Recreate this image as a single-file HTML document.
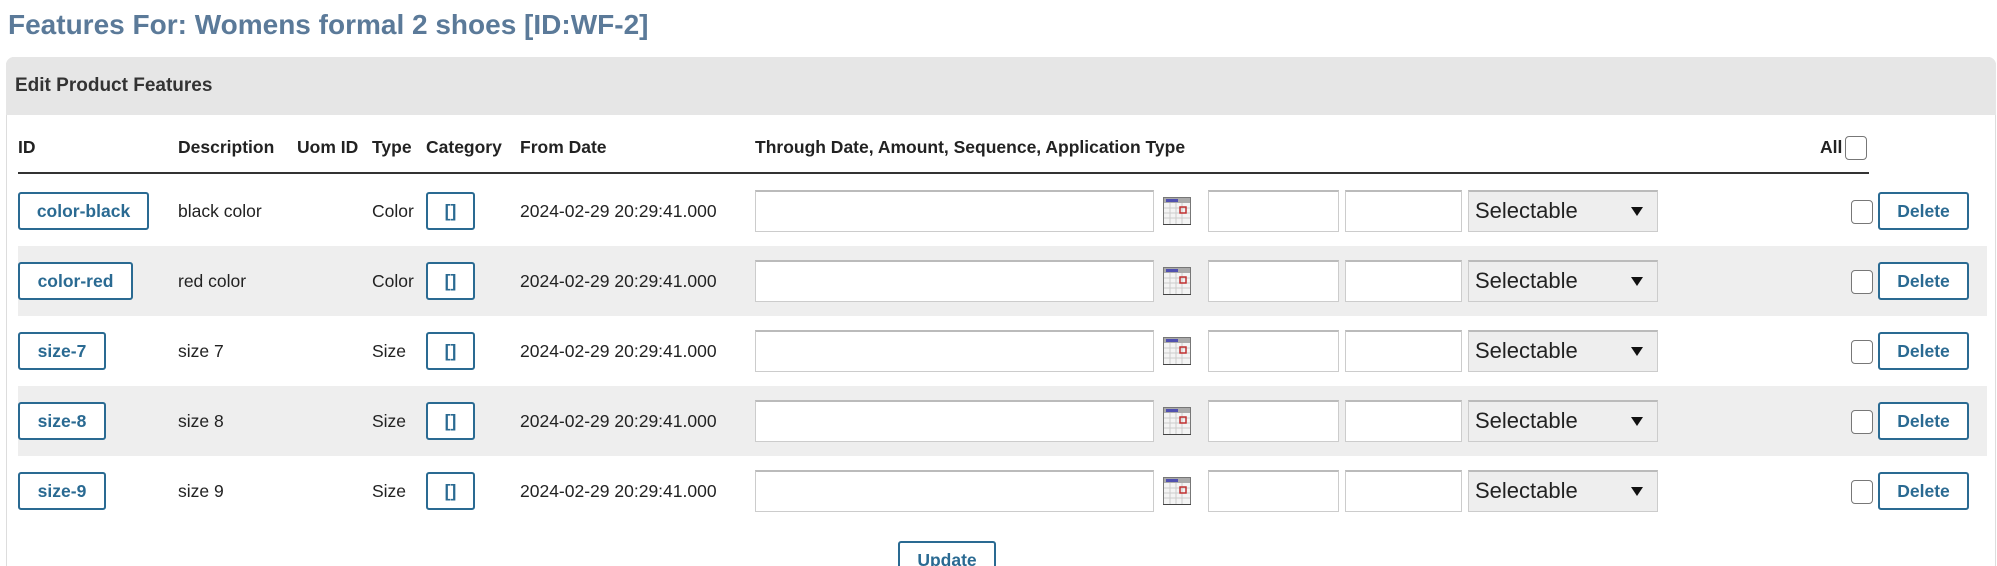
<!DOCTYPE html>
<html><head><meta charset="utf-8"><style>
*{box-sizing:border-box}
html,body{margin:0;width:1997px;height:566px;overflow:hidden}
body{background:#fff;font-family:"Liberation Sans",sans-serif;position:relative;color:#222}
.a{position:absolute}
.title{left:8px;top:9px;font-size:28px;font-weight:bold;color:#5b7a99;white-space:nowrap}
.panel{left:6px;top:57px;width:1990px;height:509px;border:1px solid #ddd;border-bottom:none;border-radius:8px 8px 0 0;background:#fff}
.ph{left:6px;top:57px;width:1990px;height:58px;background:#e6e6e6;border-radius:8px 8px 0 0}
.pht{left:15px;top:75px;font-size:19px;font-weight:bold;color:#333}
.hd{top:137px;font-size:17.5px;font-weight:bold;color:#222;white-space:nowrap}
.line{left:18px;top:172px;width:1851px;height:2px;background:#333}
.shade{left:18px;width:1969px;height:70px;background:#eeeeee}
.btn{border:2px solid #2a6a92;border-radius:3px;background:#fff;color:#2a6a92;font-weight:bold;font-size:17.5px;text-align:center;line-height:34px;height:38px;white-space:nowrap}
.t{font-size:17.5px;color:#222;white-space:nowrap}
.in{border:1px solid #ccc;border-top:2px solid #bbb;background:#fff;height:42px}
.sel{border:1px solid #ccc;border-top:2px solid #bbb;background:#eee;height:42px;font-size:22px;line-height:38px;padding-left:6px;color:#222}
.sel:after{content:"";position:absolute;right:14px;top:15px;border-left:6px solid transparent;border-right:6px solid transparent;border-top:9px solid #111}
.cb{width:22px;height:24px;border:1.5px solid #777;border-radius:4px;background:#fff}
</style></head><body>
<div class="a title">Features For: Womens formal 2 shoes [ID:WF-2]</div>
<div class="a panel"></div>
<div class="a ph"></div>
<div class="a pht">Edit Product Features</div>
<div class="a hd" style="left:18px">ID</div>
<div class="a hd" style="left:178px">Description</div>
<div class="a hd" style="left:297px">Uom ID</div>
<div class="a hd" style="left:372px">Type</div>
<div class="a hd" style="left:426px">Category</div>
<div class="a hd" style="left:520px">From Date</div>
<div class="a hd" style="left:755px">Through Date, Amount, Sequence, Application Type</div>
<div class="a hd" style="left:1820px">All</div>
<div class="a cb" style="left:1845px;top:136px"></div>
<div class="a line"></div>
<div class="a shade" style="top:246px"></div>
<div class="a shade" style="top:386px"></div>

<div id="rows"></div>
<div class="a btn" style="left:898px;top:541px;width:98px;height:40px">Update</div>
<script>
var rows=[["color-black","black color","Color",131],["color-red","red color","Color",115],["size-7","size 7","Size",88],["size-8","size 8","Size",88],["size-9","size 9","Size",88]];
var h="";
rows.forEach(function(r,i){
var c=211+i*70;
h+='<div class="a btn" style="left:18px;top:'+(c-19)+'px;width:'+r[3]+'px">'+r[0]+'</div>';
h+='<div class="a t" style="left:178px;top:'+(c-10)+'px">'+r[1]+'</div>';
h+='<div class="a t" style="left:372px;top:'+(c-10)+'px">'+r[2]+'</div>';
h+='<div class="a btn" style="left:426px;top:'+(c-19)+'px;width:49px">[]</div>';
h+='<div class="a t" style="left:520px;top:'+(c-10)+'px">2024-02-29 20:29:41.000</div>';
h+='<div class="a in" style="left:755px;top:'+(c-21)+'px;width:399px"></div>';
h+='<svg class="a" style="left:1163px;top:'+(c-14)+'px" width="28" height="28" viewBox="0 0 28 28"><rect x="0.5" y="0.5" width="27" height="27" fill="#f4f4f4" stroke="#777"/><rect x="1" y="1" width="26" height="5" fill="#aaa"/><rect x="3" y="2" width="12" height="3" fill="#5050b0"/><g stroke="#ccc"><line x1="1" y1="11" x2="27" y2="11"/><line x1="1" y1="16" x2="27" y2="16"/><line x1="1" y1="21" x2="27" y2="21"/><line x1="7" y1="6" x2="7" y2="27"/><line x1="13" y1="6" x2="13" y2="27"/><line x1="19" y1="6" x2="19" y2="27"/></g><rect x="17" y="10" width="6" height="6" fill="none" stroke="#c03030" stroke-width="1.5"/><line x1="0" y1="27.5" x2="28" y2="27.5" stroke="#444"/></svg>';
h+='<div class="a in" style="left:1208px;top:'+(c-21)+'px;width:131px"></div>';
h+='<div class="a in" style="left:1345px;top:'+(c-21)+'px;width:117px"></div>';
h+='<div class="a sel" style="left:1468px;top:'+(c-21)+'px;width:190px">Selectable</div>';
h+='<div class="a cb" style="left:1851px;top:'+(c-11)+'px"></div>';
h+='<div class="a btn" style="left:1878px;top:'+(c-19)+'px;width:91px">Delete</div>';
});
document.getElementById("rows").innerHTML=h;
</script>
</body></html>
